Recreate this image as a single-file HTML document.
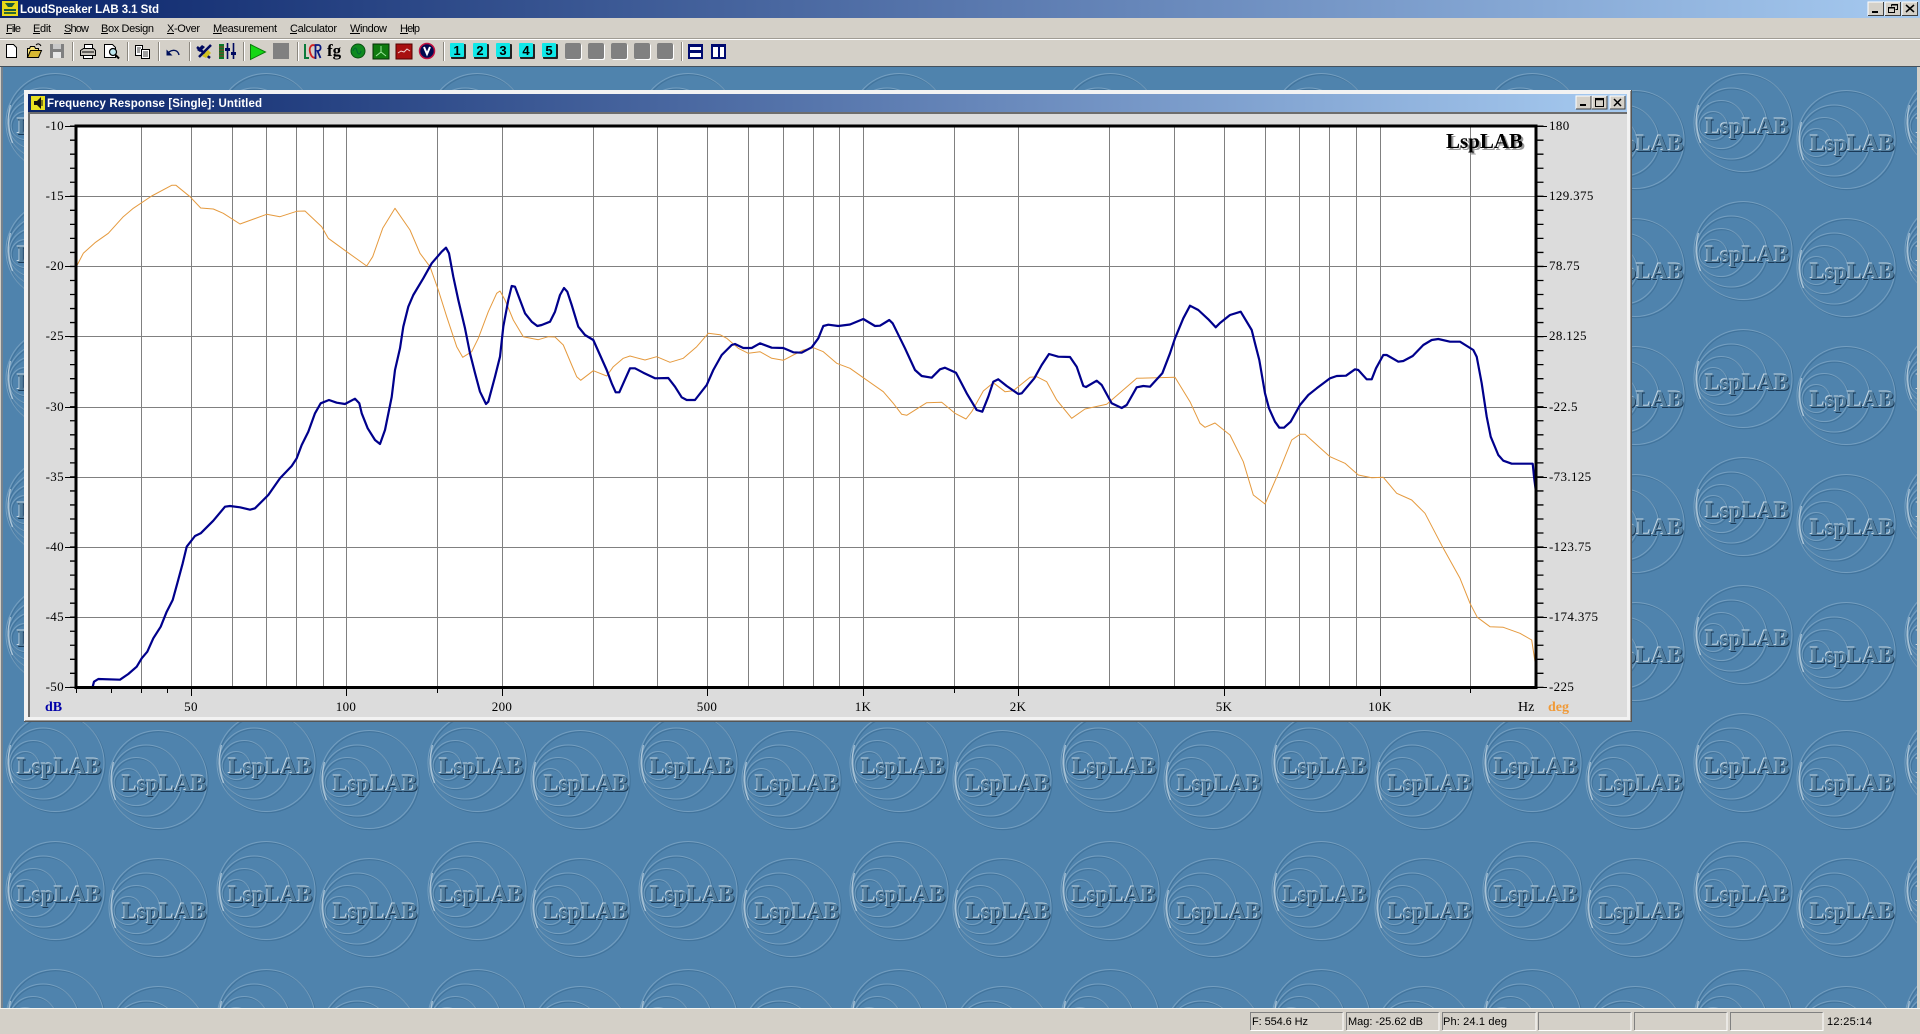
<!DOCTYPE html>
<html><head><meta charset="utf-8"><title>LoudSpeaker LAB 3.1 Std</title>
<style>
html,body{margin:0;padding:0;background:#4f83ad;overflow:hidden}
svg{display:block}
.t{font-family:"Liberation Sans",sans-serif;font-size:11px;fill:#000}
.h{font-family:"Liberation Sans",sans-serif;font-size:11.5px;font-weight:bold;fill:#fff}
.m{font-family:"Liberation Serif",serif;font-size:23px;font-weight:bold}
</style></head><body>
<svg width="1920" height="1034" viewBox="0 0 1920 1034" xmlns="http://www.w3.org/2000/svg">
<defs>
<linearGradient id="tg"><stop offset="0" stop-color="#0a246a"/><stop offset="1" stop-color="#a6caf0"/></linearGradient>
<g id="rings" fill="none">
<g stroke="#2d5c84" stroke-opacity=".42" stroke-width="1.1" transform="translate(.7 .7)">
<circle cx="50" cy="50" r="49"/><circle cx="38" cy="51" r="35.5"/><circle cx="28" cy="52" r="24"/><circle cx="20" cy="53" r="14"/></g>
<g stroke="#a9c6dc" stroke-opacity=".42" stroke-width="1" transform="translate(-.5 -.5)">
<circle cx="50" cy="50" r="49"/><circle cx="38" cy="51" r="35.5"/><circle cx="28" cy="52" r="24"/><circle cx="20" cy="53" r="14"/></g>
<path d="M5 32Q0 50 7 70" stroke="#dce9f2" stroke-opacity=".6" stroke-width="1.4"/>
</g>
<pattern id="wall" patternUnits="userSpaceOnUse" x="0" y="-59" width="211" height="128">
<rect width="211" height="128" fill="#4f83ad"/>
<use href="#rings" x="5.5" y="4"/>
<use href="#rings" x="108.5" y="21"/>
<text class="m" x="16.2" y="64.2" fill="#c3d6e4">LspLAB</text><text class="m" x="17.8" y="65.9" fill="#1a3a58">LspLAB</text><text class="m" x="17" y="65" fill="#527d9d">LspLAB</text>
<text class="m" x="121.200" y="81.200" fill="#c3d6e4">LspLAB</text><text class="m" x="122.800" y="82.900" fill="#1a3a58">LspLAB</text><text class="m" x="122" y="82" fill="#527d9d">LspLAB</text>
</pattern>
</defs>

<!-- frame -->
<rect width="1920" height="1034" fill="#d4d0c8"/>
<rect x="3" y="66" width="1914" height="942" fill="url(#wall)"/>
<rect x="1" y="66" width="2" height="942" fill="#77828c"/>
<rect x="0" y="66" width="1920" height="1" fill="#45515c"/>

<!-- title bar -->
<rect width="1920" height="18" fill="url(#tg)"/>
<rect x="2" y="1" width="16" height="15" fill="#e8d818"/><path d="M5 3h10l-3 4h-4zM4 9h12v2H4z" fill="#1c5a3a"/><rect x="4" y="12" width="12" height="2" fill="#2e6a2e"/>
<text class="h" x="20" y="13" textLength="139" lengthAdjust="spacing">LoudSpeaker LAB 3.1 Std</text>
<g>
<rect x="1868" y="2" width="16" height="14" fill="#d4d0c8"/><path d="M1868 16V2h16" fill="none" stroke="#fff"/><path d="M1868 15.5h15.5V2" fill="none" stroke="#404040"/><rect x="1872" y="11" width="6" height="2" fill="#000"/>
<rect x="1885" y="2" width="16" height="14" fill="#d4d0c8"/><path d="M1885 16V2h16" fill="none" stroke="#fff"/><path d="M1885 15.5h15.5V2" fill="none" stroke="#404040"/><path d="M1891.5 4.5h6v5h-2M1891.5 4.5v2M1888.5 7.5h6v5h-6z" fill="none" stroke="#000"/><path d="M1891 5h7M1888 8h7" stroke="#000"/>
<rect x="1902" y="2" width="16" height="14" fill="#d4d0c8"/><path d="M1902 16V2h16" fill="none" stroke="#fff"/><path d="M1902 15.5h15.5V2" fill="none" stroke="#404040"/><path d="M1906 5l8 7M1914 5l-8 7" stroke="#000" stroke-width="1.5"/>
</g>

<!-- menu -->
<g class="menu">
<text class="t" x="6" y="32" textLength="15" lengthAdjust="spacing">File</text>
<text class="t" x="33" y="32" textLength="18" lengthAdjust="spacing">Edit</text>
<text class="t" x="64" y="32" textLength="25" lengthAdjust="spacing">Show</text>
<text class="t" x="101" y="32" textLength="53" lengthAdjust="spacing">Box Design</text>
<text class="t" x="167" y="32" textLength="33" lengthAdjust="spacing">X-Over</text>
<text class="t" x="213" y="32" textLength="64" lengthAdjust="spacing">Measurement</text>
<text class="t" x="290" y="32" textLength="47" lengthAdjust="spacing">Calculator</text>
<text class="t" x="350" y="32" textLength="37" lengthAdjust="spacing">Window</text>
<text class="t" x="400" y="32" textLength="20" lengthAdjust="spacing">Help</text>
<path d="M6 33.5h6M33 33.5h7M64 33.5h7M101 33.5h7M167 33.5h7M213 33.5h9M290 33.5h7M350 33.5h10M400 33.5h8" stroke="#000"/>
</g>
<rect y="38" width="1920" height="1" fill="#a09c94"/><rect y="39" width="1920" height="1" fill="#fff"/>

<!-- toolbar separators -->
<g fill="#8c8880">
<rect x="72" y="42" width="1" height="19"/><rect x="127" y="42" width="1" height="19"/><rect x="158" y="42" width="1" height="19"/><rect x="189" y="42" width="1" height="19"/><rect x="243" y="42" width="1" height="19"/><rect x="297" y="42" width="1" height="19"/><rect x="443" y="42" width="1" height="19"/><rect x="681" y="42" width="1" height="19"/>
</g>
<g fill="#fff">
<rect x="73" y="42" width="1" height="19"/><rect x="128" y="42" width="1" height="19"/><rect x="159" y="42" width="1" height="19"/><rect x="190" y="42" width="1" height="19"/><rect x="244" y="42" width="1" height="19"/><rect x="298" y="42" width="1" height="19"/><rect x="444" y="42" width="1" height="19"/><rect x="682" y="42" width="1" height="19"/>
</g>

<!-- toolbar icons -->
<path d="M6.5 44.5h7l3 3v10h-10z" fill="#fff" stroke="#000"/>
<path d="M27.5 57.5v-9h2l1-2h4l1 2h3v2" fill="#f5e27a" stroke="#000"/><path d="M27.5 57.5l3-7h11l-3 7z" fill="#d8b832" stroke="#000"/><path d="M36 45c2-2 4-1 5 1" fill="none" stroke="#000"/>
<rect x="50" y="44" width="14" height="14" fill="#808080"/><rect x="53" y="44" width="8" height="5" fill="#c8c8c8"/><rect x="53" y="52" width="8" height="6" fill="#e8e8e8"/>
<path d="M84.5 44.5h8v5h-8z" fill="#fff" stroke="#000"/><path d="M80.5 50.5l3-2h10l2 2v5h-15z" fill="#c8c4bc" stroke="#000"/><path d="M83.5 55.5h9v3h-9z" fill="#fff" stroke="#000"/><path d="M82 52h12" stroke="#000"/>
<path d="M104.5 44.5h8l3 3v10h-11z" fill="#fff" stroke="#000"/><circle cx="113" cy="52" r="3.5" fill="#bfe8f0" stroke="#000" stroke-width="1.2"/><path d="M115.5 55l3.5 3.5" stroke="#000" stroke-width="2"/>
<path d="M135.5 45.5h7v10h-7z" fill="#fff" stroke="#000"/><path d="M141.5 49.5h8v9h-8z" fill="#fff" stroke="#000"/><path d="M137 48h4M137 50h3M137 52h3M143 52h5M143 54h5M143 56h5" stroke="#000" stroke-width=".8"/>
<path d="M179 55c-1-5-6-6-10-3l-1 1" fill="none" stroke="#00105a" stroke-width="1.4"/><path d="M166.5 49.5v6h6z" fill="#00105a"/>
<path d="M197 47l13 11M199 57l12-12" stroke="#000a60" stroke-width="2.5"/><path d="M197 50l5-5 3 2-5 5z" fill="#000a60"/><path d="M202 56l6-6 3 3-5 5z" fill="#d0c020"/>
<rect x="219" y="44" width="5" height="15" fill="#0a7a2a"/><path d="M219 47h5M219 50h5M219 53h5M219 56h5" stroke="#c02020" stroke-width=".8"/>
<path d="M227.5 43v16M233.5 43v16" stroke="#000a60" stroke-width="1.6"/><rect x="225" y="48" width="5" height="3" fill="#000a60"/><rect x="231" y="52" width="5" height="3" fill="#000a60"/>
<path d="M250.5 44.5l15 7.500-15 7.500z" fill="#14d814" stroke="#0a7a0a"/>
<rect x="273" y="43" width="16" height="16" fill="#808080"/>
<path d="M305 44v14h4" fill="none" stroke="#0a7a3a" stroke-width="2"/><path d="M316 46c-5-3-7 2-6 6s3 7 6 5" fill="none" stroke="#d02020" stroke-width="1.8"/><path d="M315.500 59V45h3c3 0 3 6-1 6l3 7" fill="none" stroke="#0a1a80" stroke-width="1.8"/>
<text x="327" y="56" font-family="'Liberation Serif',serif" font-weight="bold" font-size="17" fill="#000">fg</text>
<circle cx="358" cy="51" r="7" fill="#0f8a1f" stroke="#0a5010"/><path d="M353 51c1.500-4 3-4 4 0s3 4 4 0" fill="none" stroke="#063" stroke-width="1"/>
<rect x="373" y="44" width="16" height="15" fill="#0f7a0f" stroke="#063006"/><path d="M381 46v6l-5 4M381 52l5 4" fill="none" stroke="#9fe89f"/>
<rect x="396" y="44" width="16" height="15" fill="#a81010" stroke="#500"/><path d="M398 53l3-2 3 1 3-3 3 2" fill="none" stroke="#f0d0d0"/>
<circle cx="427" cy="51" r="7.500" fill="#000a50" stroke="#c01040" stroke-width="1.500"/><path d="M424 47l3 7 3-7" fill="none" stroke="#fff" stroke-width="2"/>

<!-- numbered buttons -->
<g font-family="'Liberation Sans',sans-serif" font-weight="bold" font-size="13" text-anchor="middle" fill="#000">
<rect x="451" y="44" width="15" height="15" rx="1" fill="#222"/><rect x="450" y="43" width="14" height="14" rx="1" fill="#10e8e8"/><text x="457" y="55">1</text>
<rect x="474" y="44" width="15" height="15" rx="1" fill="#222"/><rect x="473" y="43" width="14" height="14" rx="1" fill="#10e8e8"/><text x="480" y="55">2</text>
<rect x="497" y="44" width="15" height="15" rx="1" fill="#222"/><rect x="496" y="43" width="14" height="14" rx="1" fill="#10e8e8"/><text x="503" y="55">3</text>
<rect x="520" y="44" width="15" height="15" rx="1" fill="#222"/><rect x="519" y="43" width="14" height="14" rx="1" fill="#10e8e8"/><text x="526" y="55">4</text>
<rect x="543" y="44" width="15" height="15" rx="1" fill="#222"/><rect x="542" y="43" width="14" height="14" rx="1" fill="#10e8e8"/><text x="549" y="55">5</text>
</g>
<g fill="#fff"><rect x="566" y="44" width="16" height="16" rx="2"/><rect x="589" y="44" width="16" height="16" rx="2"/><rect x="612" y="44" width="16" height="16" rx="2"/><rect x="635" y="44" width="16" height="16" rx="2"/><rect x="658" y="44" width="16" height="16" rx="2"/></g>
<g fill="#808080"><rect x="565" y="43" width="16" height="16" rx="2"/><rect x="588" y="43" width="16" height="16" rx="2"/><rect x="611" y="43" width="16" height="16" rx="2"/><rect x="634" y="43" width="16" height="16" rx="2"/><rect x="657" y="43" width="16" height="16" rx="2"/></g>
<rect x="688" y="44" width="15" height="15" fill="#000a70"/><rect x="690" y="47" width="11" height="3" fill="#fff"/><rect x="690" y="53" width="11" height="4" fill="#fff"/>
<rect x="711" y="44" width="15" height="15" fill="#000a70"/><rect x="713" y="47" width="5" height="10" fill="#fff"/><rect x="720" y="47" width="4" height="10" fill="#fff"/>

<!-- child window -->
<rect x="24" y="90" width="1608" height="632" fill="#f2f2f2"/>
<rect x="1631" y="90" width="1" height="632" fill="#555"/><rect x="24" y="721" width="1608" height="1" fill="#555"/>
<rect x="1630" y="91" width="1" height="630" fill="#999"/><rect x="25" y="720" width="1606" height="1" fill="#999"/>
<rect x="28" y="94" width="1599" height="18" fill="url(#tg)"/>
<rect x="28" y="112" width="1599" height="605" fill="#dcdcdc"/>
<rect x="28" y="112" width="1599" height="2" fill="#6d6d6d"/><rect x="28" y="112" width="2" height="605" fill="#6d6d6d"/>
<rect x="31" y="96" width="14" height="14" fill="#e8e020"/><path d="M34 101h3l4-4v12l-4-4h-3z" fill="#111"/><path d="M42 100v6" stroke="#111"/>
<text class="h" x="47" y="107" textLength="215" lengthAdjust="spacing">Frequency Response [Single]: Untitled</text>
<g>
<rect x="1576" y="96" width="15" height="13.500" fill="#d4d0c8"/><path d="M1576 109V96h15" fill="none" stroke="#fff"/><path d="M1576 109h15V96" fill="none" stroke="#404040"/><rect x="1580" y="104" width="6" height="2" fill="#000"/>
<rect x="1592" y="96" width="15" height="13.500" fill="#d4d0c8"/><path d="M1592 109V96h15" fill="none" stroke="#fff"/><path d="M1592 109h15V96" fill="none" stroke="#404040"/><path d="M1595.500 98.500h8v8h-8z" fill="none" stroke="#000"/><path d="M1595 99.500h9" stroke="#000" stroke-width="1.500"/>
<rect x="1610" y="96" width="15" height="13.500" fill="#d4d0c8"/><path d="M1610 109V96h15" fill="none" stroke="#fff"/><path d="M1610 109h15V96" fill="none" stroke="#404040"/><path d="M1614 99l7 7M1621 99l-7 7" stroke="#000" stroke-width="1.500"/>
</g>

<!-- plot -->
<rect x="76" y="126" width="1460" height="561.500" fill="#fff"/>
<g stroke="#808080" stroke-width="1" shape-rendering="crispEdges">
<path d="M76 196.500H1536M76 266.500H1536M76 336.500H1536M76 407.500H1536M76 477.500H1536M76 547.500H1536M76 617.500H1536"/>
<path d="M141.500 126V688M191.500 126V688M232.500 126V688M266.500 126V688M296.500 126V688M323.500 126V688M346.500 126V688M437.500 126V688M502.500 126V688M593.500 126V688M657.500 126V688M707.500 126V688M748.500 126V688M783.500 126V688M813.500 126V688M839.500 126V688M863.500 126V688M954.500 126V688M1018.500 126V688M1109.500 126V688M1174.500 126V688M1224.500 126V688M1265.500 126V688M1299.500 126V688M1329.500 126V688M1356.500 126V688M1380.500 126V688M1470.500 126V688"/>
</g>
<polyline fill="none" stroke="#e59a3e" stroke-width="1" stroke-linejoin="round" points="76.700,266 83.300,253.300 95,242.700 108.300,233.300 123.300,216.700 133.300,208.300 151.700,196 171.700,185.300 176,185.300 190,196.700 200.700,208 213.300,209 223.300,213.300 240,224 266.700,214.300 280,216.700 296.700,211.300 305,211 321.700,226.700 328.300,238.300 346.700,251.700 366.700,266 372.700,256.700 382.700,228.300 395,208.300 410,230 420,253.300 430,266.700 438.300,290 446.700,316.700 456.700,346.700 462.700,357.300 471.700,351.700 478.300,338.300 488.300,311.700 496.700,293.300 500,291 505,300 513.300,320 523.300,336.700 538.300,339.700 548.300,336.700 555,337 563.300,345 571.700,365 576.700,376.700 580.700,380.300 593.300,370.700 606.700,376 613.300,366.700 623.300,358.300 630,356 645,360 656.700,356.700 670,362.300 683.300,358.300 696.700,346.700 708.300,333.300 720,334.700 726.700,338.300 738.300,348.300 748.300,353.300 760,351.700 771.700,358.300 783.300,360.300 793.300,355 803.300,350 813.300,347.700 823.300,351.700 836.700,363.300 850,368.300 863.300,377.700 883.300,391.700 893.300,403.300 901.700,414.300 906.700,415.300 926.700,402.700 941.700,402.300 955,413.300 966,419 971.700,411.700 983.300,391 993.300,382.700 1005,391.700 1013.300,390.700 1030,377.300 1036.700,376.700 1046.700,381.700 1056.700,400 1071.700,418.300 1085,409 1106.700,404.300 1136.700,378.300 1175,377.300 1190,401.700 1200,423.300 1205,427.300 1215,423 1230,435 1243.300,461.700 1253.300,495 1265,504 1278.300,473.300 1291.700,440 1300,434.300 1305,434.300 1330,456.700 1345,463.300 1358.300,475 1371.700,477.700 1383.300,477.300 1396.700,493.300 1411.700,500 1425,513.300 1443.300,548.300 1460,578.300 1470,603.300 1477.300,617.300 1490,626.700 1503.300,627.300 1520,633.300 1531.700,640 1535,661.700"/>
<polyline fill="none" stroke="#00008c" stroke-width="2.200" stroke-linejoin="round" points="92.700,686.700 94,681.700 98.300,679 120,679.700 128.300,674 136.700,666.700 141.700,658.300 147.300,651.700 153.300,638.300 160.700,626.700 166.700,611.700 172.700,600 177.300,583.300 182.700,563.300 186.700,546.700 195,536 200.700,533.300 213.300,520.700 225,506.700 230,506 240,507.300 250,509.700 255,508.300 268.300,495 280,478.300 291.700,466 296.700,458.300 301.700,445 308.300,431.700 315,413.300 320.700,403.300 329,400 336.700,402.700 345,404 355,398.700 359.300,403.300 361.700,413.300 367.700,428.300 375,440 380,444 385,430 391.700,397 395,370 400,348.300 403.300,326.700 408.300,306.700 413.300,295 423.300,278.300 431.700,263.300 441.700,251.700 446,247.700 449,253.300 453.300,276.700 458.300,300 465,328.300 470,353.300 475,373 480,391.700 486,404 488.300,401.700 495,376.700 500,356.700 503.300,326.700 508.300,300 511.700,286 515,286.700 520,300 525,313.300 531.700,321.700 537.300,326 541.700,325 550,321.700 555,311.700 560,295 564,288 567.300,291.700 571.700,305 578.300,326.700 585,335 593.300,340 600,355 606.700,370 611.700,383.300 615.700,392.300 619.300,392.300 623.300,383.300 630,368.300 635,368.300 643.300,372.700 655,378.300 668.300,378 675,386.700 681.700,397.300 686.700,400 695,400 706.700,385 713.300,370 721.700,355 731.700,345 735,344 743.300,348 751.700,348 760,343.300 771.700,347.700 783.300,348 793.300,352.300 801.700,352.700 811.700,347.300 818.300,338.300 823.300,326 828.300,324.700 838.300,326 850,324.500 863.300,319 875,326 880,325.700 889.300,320 892.700,323.300 905,348.300 915,370 921.700,376 931.700,377.700 940,369.300 945,367.700 956,372.700 966.700,393.300 976.700,410 982.300,411.700 988.300,396.700 993.300,381.700 998.300,379.300 1006.700,386 1018.300,394 1021.700,393.300 1034.300,378.300 1041.700,365 1049,354 1058.300,356.700 1070,357 1076.700,366.700 1083.300,386 1086,387 1096.700,380.700 1101.700,385 1111.700,403.300 1121.700,408 1126.700,405 1136.700,387.300 1143.300,386 1150,386.700 1162.300,373.300 1170,353.300 1175,338.300 1183.300,318.300 1190,305.700 1198.300,310 1208.300,319.300 1215.700,327.300 1220,323 1230,315 1240.700,311.700 1251.700,330 1255,343.300 1259.300,360 1265,393.300 1269,408.300 1275,421.700 1279.300,427.700 1284,427.700 1290.700,421.700 1300,405 1308.300,395 1316.700,388.300 1330,378.300 1336.700,376 1346,375.700 1355,369.300 1358.300,370 1366.700,379.300 1371.700,379.300 1376,368.300 1383.300,355 1386.700,355 1398.300,361.700 1403.300,361 1412.700,356 1423.300,345 1431.700,340 1438.300,339 1450,341.700 1460,341.700 1473.300,350 1476.700,356.700 1481.700,383.300 1486.700,416.700 1490.700,436.700 1498.300,455 1503.300,460.700 1511.700,463.700 1532.700,463.700 1534,476.700 1535.700,490"/>
<rect x="76" y="126" width="1460" height="561.500" fill="none" stroke="#000" stroke-width="3"/>

<!-- ticks -->
<line x1="73" y1="125.500" x2="73" y2="688.500" stroke="#000" stroke-width="6" stroke-dasharray="1.300 12.730"/>
<line x1="1540" y1="125.500" x2="1540" y2="688.500" stroke="#000" stroke-width="7" stroke-dasharray="1.300 12.730"/>
<path d="M65 126.500h11M65 196.500h11M65 266.500h11M65 336.500h11M65 407.500h11M65 477.500h11M65 547.500h11M65 617.500h11M65 687.500h11M1536 126.500h11M1536 196.500h11M1536 266.500h11M1536 336.500h11M1536 407.500h11M1536 477.500h11M1536 547.500h11M1536 617.500h11M1536 687.500h11" stroke="#000" stroke-width="1" shape-rendering="crispEdges"/>
<path d="M76.500 688v5M111.500 688v5M141.500 688v5M167.500 688v5M437.500 688v5M954.500 688v5M1470.500 688v5M191.500 688v8M346.500 688v8M502.500 688v8M707.500 688v8M863.500 688v8M1018.500 688v8M1224.500 688v8M1380.500 688v8" stroke="#000" stroke-width="1" shape-rendering="crispEdges"/>

<!-- left labels -->
<g text-anchor="end" style="font-family:'Liberation Serif',serif;font-size:13px;letter-spacing:.35px">
<text x="64" y="130">-10</text><text x="64" y="200">-15</text><text x="64" y="270">-20</text><text x="64" y="340">-25</text><text x="64" y="411">-30</text><text x="64" y="481">-35</text><text x="64" y="551">-40</text><text x="64" y="621">-45</text><text x="64" y="691">-50</text>
</g>
<g style="font-family:'Liberation Serif',serif;font-size:13px;letter-spacing:.35px">
<text x="1549" y="130">180</text><text x="1549" y="200">129.375</text><text x="1549" y="270">78.75</text><text x="1549" y="340">28.125</text><text x="1549" y="411">-22.5</text><text x="1549" y="481">-73.125</text><text x="1549" y="551">-123.75</text><text x="1549" y="621">-174.375</text><text x="1549" y="691">-225</text>
</g>
<g text-anchor="middle" style="font-family:'Liberation Serif',serif;font-size:13px;letter-spacing:.35px">
<text x="191" y="711">50</text><text x="346" y="711">100</text><text x="502" y="711">200</text><text x="707" y="711">500</text><text x="863" y="711">1K</text><text x="1018" y="711">2K</text><text x="1224" y="711">5K</text><text x="1380" y="711">10K</text>
</g>
<text x="1518" y="711" style="font-family:'Liberation Serif',serif;font-size:14px">Hz</text>
<text x="45" y="711" style="font-family:'Liberation Serif',serif;font-size:14px;font-weight:bold" fill="#0000a8">dB</text>
<text x="1548" y="711" style="font-family:'Liberation Serif',serif;font-size:14px;font-weight:bold" fill="#f09a38">deg</text>
<text x="1448" y="150" style="font-family:'Liberation Serif',serif;font-size:21px;font-weight:bold" fill="#999">LspLAB</text>
<text x="1446" y="148" style="font-family:'Liberation Serif',serif;font-size:21px;font-weight:bold" fill="#000">LspLAB</text>

<!-- status bar -->
<rect y="1008" width="1920" height="26" fill="#d4d0c8"/>
<rect y="1008" width="1920" height="1" fill="#f4f4f0"/>
<g fill="none" stroke-width="1">
<path d="M1250.500 1030V1012.500H1343" stroke="#808080"/><path d="M1250.500 1030.500H1343V1012.500" stroke="#fff"/>
<path d="M1346.500 1030V1012.500H1439" stroke="#808080"/><path d="M1346.500 1030.500H1439V1012.500" stroke="#fff"/>
<path d="M1442.500 1030V1012.500H1536" stroke="#808080"/><path d="M1442.500 1030.500H1536V1012.500" stroke="#fff"/>
<path d="M1538.500 1030V1012.500H1631" stroke="#808080"/><path d="M1538.500 1030.500H1631V1012.500" stroke="#fff"/>
<path d="M1634.500 1030V1012.500H1727" stroke="#808080"/><path d="M1634.500 1030.500H1727V1012.500" stroke="#fff"/>
<path d="M1730.500 1030V1012.500H1823" stroke="#808080"/><path d="M1730.500 1030.500H1823V1012.500" stroke="#fff"/>
</g>
<text class="t" x="1252" y="1025" textLength="56" lengthAdjust="spacing">F: 554.6 Hz</text>
<text class="t" x="1348" y="1025" textLength="75" lengthAdjust="spacing">Mag: -25.62 dB</text>
<text class="t" x="1443" y="1025" textLength="64" lengthAdjust="spacing">Ph: 24.1 deg</text>
<text class="t" x="1827" y="1025" textLength="45" lengthAdjust="spacing">12:25:14</text>
</svg>
</body></html>
